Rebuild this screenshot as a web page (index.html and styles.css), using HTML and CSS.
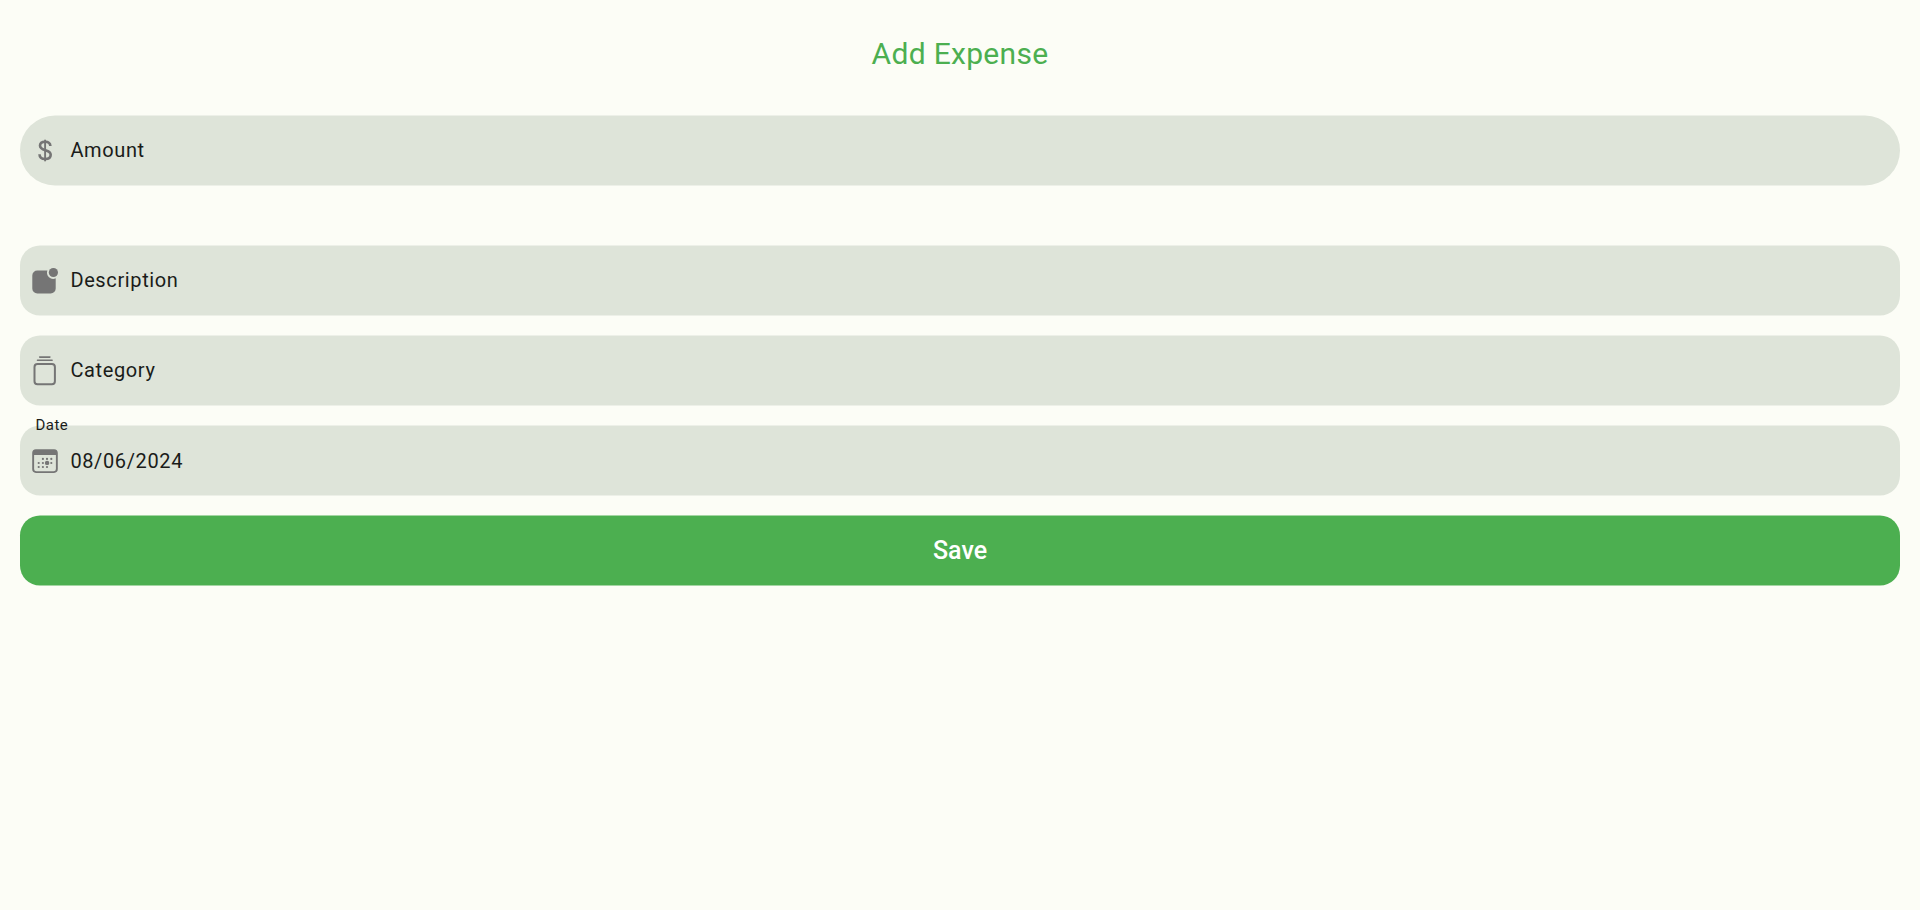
FILE: index.html
```
<!DOCTYPE html>
<html lang="en">
<head>
<meta charset="utf-8">
<title>Add Expense</title>
<link rel="stylesheet" href="styles.css">
</head>
<body>
<main class="page">
  <h1 class="title">Add Expense</h1>
  <div class="field field-amount">
    <svg class="icon" viewBox="0 0 40 40"><path d="M25.400 16c-.2-3-2.200-4.300-5.200-4.300-3.200 0-5.200 1.500-5.200 3.900 0 6.200 10.700 3.300 10.700 9.200 0 2.600-2.200 4.200-5.500 4.200-3.600 0-5.600-1.800-5.700-4.800" fill="none" stroke="#757575" stroke-width="2.600"/><path d="M20.100 9.700v21.600" fill="none" stroke="#757575" stroke-width="1.900"/></svg>
    <span class="label">Amount</span>
  </div>
  <div class="field">
    <svg class="icon" viewBox="0 0 40 40"><path d="M22.400 10.500a6.200 6.200 0 0 0 8.300 7.800V28.400a5 5 0 0 1-5 5H12.300a5 5 0 0 1-5-5V15.500a5 5 0 0 1 5-5z" fill="#757575"/><circle cx="28.400" cy="12.500" r="4.600" fill="#757575"/></svg>
    <span class="label">Description</span>
  </div>
  <div class="field">
    <svg class="icon" viewBox="0 0 40 40"><rect x="9.500" y="13.900" width="20.400" height="20.400" rx="3" fill="none" stroke="#757575" stroke-width="2"/><path d="M12.500 10.300h14.600M14.700 7.100h10.200" fill="none" stroke="#757575" stroke-width="1.600" stroke-linecap="round"/></svg>
    <span class="label">Category</span>
  </div>
  <div class="field">
    <span class="caption">Date</span>
    <svg class="icon" viewBox="0 0 40 40"><path fill="#757575" fill-rule="evenodd" d="M11 9.300h18a3.800 3.800 0 0 1 3.800 3.800v16a3.800 3.800 0 0 1-3.800 3.800H11a3.800 3.800 0 0 1-3.800-3.800v-16A3.800 3.800 0 0 1 11 9.300zM9.100 15v14a2.300 2.300 0 0 0 2.300 2.300h17.200a2.300 2.300 0 0 0 2.300-2.300V15z"/><path d="M17.900 18.900h.01M22 18.900h.01M26.300 18.900h.01M13.700 23h.01M17.900 23h.01M26.300 23h.01M13.700 27h.01M17.900 27h.01M22 27h.01" stroke="#757575" stroke-width="2.200" stroke-linecap="round"/><circle cx="22.100" cy="22.900" r="2.200" fill="#757575"/></svg>
    <span class="label label-value">08/06/2024</span>
  </div>
  <button class="save" type="button">Save</button>
</main>
</body>
</html>
```
FILE: styles.css
```
body {
  margin: 0;
  background: #fcfdf6;
  font-family: Roboto, "Liberation Sans", sans-serif;
}
.page {
  display: flex;
  flex-direction: column;
  gap: 20px;
  padding: 36px 20px;
}
.title {
  margin: 0 0 23px;
  color: #4caf50;
  font-size: 30px;
  font-weight: 400;
  letter-spacing: 0.3px;
  line-height: 36px;
  text-align: center;
}
.field,
.save {
  position: relative;
  isolation: isolate;
  box-sizing: border-box;
  height: 70px;
}
.field {
  display: flex;
  align-items: center;
  padding-left: 5px;
}
.field::before,
.save::before {
  content: "";
  position: absolute;
  inset: 0;
  z-index: -1;
  border-radius: 20px;
  background: #dee4d9;
  transform: translateY(0.5px);
}
.field-amount {
  margin-bottom: 40px;
}
.field-amount::before {
  border-radius: 35px;
}
.icon {
  flex: none;
  width: 40px;
  height: 40px;
}
.label {
  margin-left: 5.4px;
  color: #1a1c19;
  font-size: 20px;
  letter-spacing: 0.625px;
  line-height: 24px;
}
.label-value {
  padding-top: 2px;
}
.caption {
  position: absolute;
  top: -9px;
  left: 15.4px;
  color: #1a1c19;
  font-size: 15px;
  letter-spacing: 0.5px;
  line-height: 18px;
}
.save {
  padding: 0;
  border: 0;
  background: none;
  color: #fff;
  font-family: inherit;
  font-size: 25px;
  font-weight: 500;
}
.save::before {
  background: #4caf50;
}
```
